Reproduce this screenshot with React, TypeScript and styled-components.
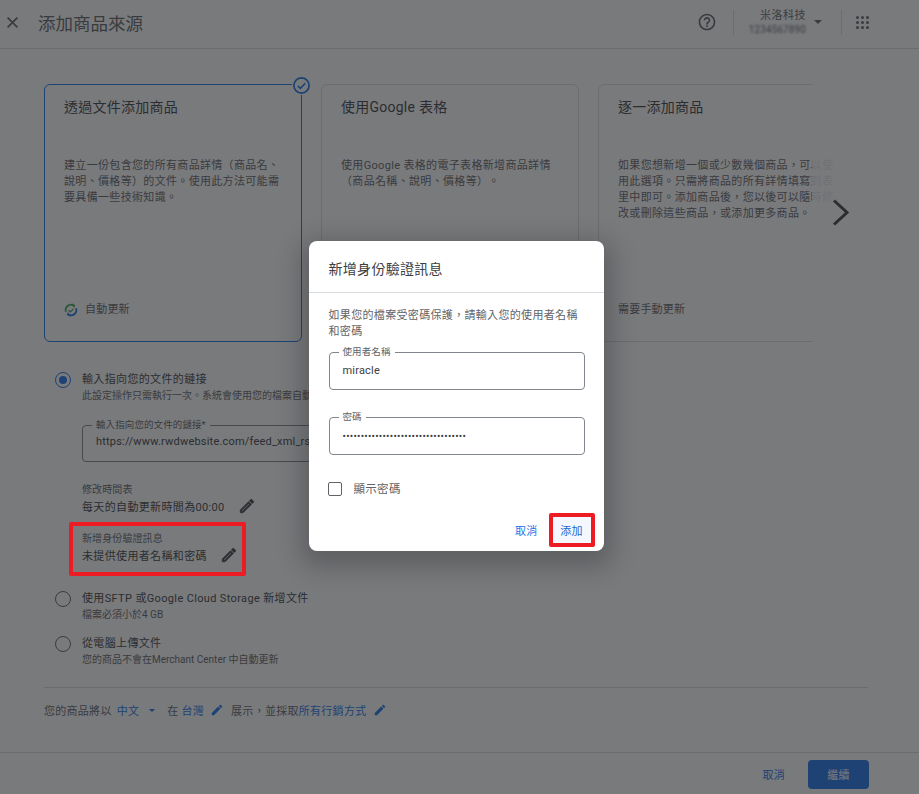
import React from "react";
import styled, { createGlobalStyle } from "styled-components";

const Global = createGlobalStyle`
  html, body { margin: 0; padding: 0; height: 100%; overflow: hidden; background: #fff; }
  body {
    font-family: Roboto, "Noto Sans CJK TC", "Liberation Sans", sans-serif;
    color: #3c4043;
    text-spacing-trim: space-all;
  }
  * { box-sizing: border-box; }
`;

const Page = styled.div`
  position: relative;
  width: 919px;
  height: 794px;
  display: flex;
  flex-direction: column;
  overflow: hidden;
`;

const Header = styled.header`
  height: 49px;
  flex: none;
  display: flex;
  align-items: center;
  padding: 0 50px 4px 7px;
  border-bottom: 1px solid #dadce0;
`;
const CloseBtn = styled.span`
  display: flex;
  width: 11px;
  margin-right: 20px;
  color: #5f6368;
`;
const Title = styled.h1`
  margin: 0;
  flex: 1;
  font-size: 17.5px;
  font-weight: 400;
  color: #5f6368;
`;
const HeaderDivider = styled.span`
  width: 1px;
  height: 25px;
  background: #dadce0;
`;
const HelpBtn = styled.span`
  display: flex;
  margin-right: 16px;
  color: #5f6368;
`;
const Account = styled.div`
  width: 72px;
  display: flex;
  flex-direction: column;
  align-items: flex-end;
  padding-top: 1px;
`;
const AccountName = styled.span`
  font-size: 11px;
  line-height: 14px;
  letter-spacing: 0.5px;
  color: #5f6368;
`;
const AccountId = styled.span`
  font-size: 10px;
  line-height: 13px;
  letter-spacing: 0.1px;
  color: #5f6368;
  filter: blur(1.3px);
`;
const HeaderCaret = styled.span`
  width: 0;
  height: 0;
  margin: 0 19px 0 8px;
  border: 4px solid transparent;
  border-top: 4px solid #5f6368;
  border-bottom: 0;
`;
const AppsBtn = styled.span`
  display: grid;
  grid-template-columns: repeat(3, 3px);
  gap: 2px;
  margin-left: 14px;
  span { width: 3px; height: 3px; border-radius: 50%; background: #5f6368; }
`;

const Body = styled.main`
  flex: 1;
  padding: 35px 0 0 44px;
  display: flex;
  flex-direction: column;
`;
const Carousel = styled.div`
  position: relative;
  display: flex;
  gap: 19px;
  width: 812px;
`;
const Card = styled.section<{ $selected?: boolean }>`
  position: relative;
  flex: none;
  width: 258px;
  height: 258px;
  padding: 13px 19px 23px;
  display: flex;
  flex-direction: column;
  border-radius: 6px;
  border: 1px solid ${(p) => (p.$selected ? "#1a73e8" : "#dadce0")};
`;
const CardTitle = styled.h2`
  margin: 0 0 42px;
  font-size: 14px;
  line-height: 18px;
  font-weight: 400;
  letter-spacing: 0.25px;
  color: #3c4043;
`;
const CardText = styled.p`
  margin: 0;
  flex: 1;
  font-size: 11px;
  line-height: 16px;
  letter-spacing: 0.33px;
  color: #5f6368;
`;
const CardNote = styled.div`
  display: flex;
  align-items: center;
  gap: 7px;
  font-size: 11px;
  line-height: 16px;
  letter-spacing: 0.2px;
  color: #5f6368;
`;
const CheckBadge = styled.span`
  position: absolute;
  top: -9px;
  right: -10px;
  display: flex;
  background: #fff;
  border-radius: 50%;
  padding: 1px;
`;
const Fade = styled.div`
  position: absolute;
  left: 768px;
  top: 0;
  width: 62px;
  height: 258px;
  background: linear-gradient(to right, rgba(255, 255, 255, 0.82), rgba(255, 255, 255, 0.96));
`;
const NextBtn = styled.span`
  position: absolute;
  left: 788px;
  top: 115px;
  display: flex;
  color: #3c4043;
`;

const Options = styled.div`
  margin-top: 30px;
  margin-left: 11px;
  display: flex;
  flex-direction: column;
`;
const Option = styled.div<{ $top?: number }>`
  display: grid;
  grid-template-columns: 16px 1fr;
  column-gap: 11px;
  margin-top: ${(p) => p.$top ?? 0}px;
`;
const Radio = styled.span<{ $on?: boolean }>`
  width: 16px;
  height: 16px;
  border-radius: 50%;
  border: 1.3px solid ${(p) => (p.$on ? "#1a73e8" : "#5f6368")};
  display: flex;
  align-items: center;
  justify-content: center;
  &::after {
    content: "";
    display: ${(p) => (p.$on ? "block" : "none")};
    width: 8px;
    height: 8px;
    border-radius: 50%;
    background: #1a73e8;
  }
`;
const OptionBody = styled.div`
  min-width: 0;
`;
const OptionTitle = styled.div`
  font-size: 11px;
  line-height: 16px;
  letter-spacing: 0.35px;
  color: #3c4043;
`;
const OptionSub = styled.div`
  font-size: 10px;
  line-height: 16px;
  color: #5f6368;
  white-space: nowrap;
`;
const PageField = styled.fieldset`
  margin: 15px 0 0;
  padding: 0 13px;
  width: 400px;
  height: 43px;
  border: 1px solid #80868b;
  border-radius: 4px;
`;
const PageLegend = styled.legend`
  padding: 0 4px;
  margin-left: -4px;
  font-size: 9.5px;
  line-height: 12px;
  letter-spacing: 0.1px;
  color: #5f6368;
`;
const PageFieldValue = styled.div`
  font-size: 11px;
  line-height: 16px;
  letter-spacing: 0.2px;
  margin-top: 3px;
  color: #3c4043;
  white-space: nowrap;
`;
const Setting = styled.div<{ $top: number }>`
  margin-top: ${(p) => p.$top}px;
`;
const SettingLabel = styled.div`
  font-size: 10px;
  line-height: 14px;
  letter-spacing: 0.1px;
  color: #5f6368;
`;
const SettingRow = styled.div`
  display: flex;
  align-items: center;
  gap: 13px;
  height: 18px;
  font-size: 11px;
  letter-spacing: 0.35px;
  color: #3c4043;
`;
const Line = styled.hr`
  width: 824px;
  margin: 19px 0 0;
  border: 0;
  border-top: 1px solid #dadce0;
`;
const Region = styled.div`
  margin-top: 14px;
  height: 16px;
  display: flex;
  align-items: center;
  font-size: 11px;
  letter-spacing: 0.28px;
  color: #5f6368;
  white-space: nowrap;
`;
const Link = styled.span<{ $left?: number }>`
  color: #1a73e8;
  margin-left: ${(p) => p.$left ?? 0}px;
`;
const RegionCaret = styled.span`
  width: 0;
  height: 0;
  margin: 0 12px 0 10px;
  border: 3px solid transparent;
  border-top: 3px solid #1a73e8;
  border-bottom: 0;
`;
const RegionIcon = styled.span<{ $left: number; $right: number }>`
  display: flex;
  color: #1a73e8;
  margin: 0 ${(p) => p.$right}px 0 ${(p) => p.$left}px;
`;

const Footer = styled.footer`
  height: 42px;
  flex: none;
  border-top: 1px solid #dadce0;
  display: flex;
  align-items: center;
  justify-content: flex-end;
  gap: 23px;
  padding: 1px 50px 0 0;
`;
const TextLink = styled.span`
  font-size: 11px;
  color: #1a73e8;
  letter-spacing: 0.3px;
`;
const Primary = styled.span`
  width: 61px;
  height: 29px;
  border-radius: 4px;
  background: #1a73e8;
  color: #fff;
  font-size: 11px;
  letter-spacing: 0.3px;
  display: flex;
  align-items: center;
  justify-content: center;
`;

const Scrim = styled.div`
  position: absolute;
  inset: 0;
  background: rgba(32, 33, 36, 0.6);
  display: flex;
  align-items: center;
  justify-content: center;
  padding: 0 7px 2px 0;
`;
const Annotation = styled.div`
  position: absolute;
  left: 69px;
  top: 522px;
  width: 177px;
  height: 54px;
  border: 4px solid #ed1c24;
  border-radius: 2px;
`;
const Dialog = styled.div`
  width: 295px;
  height: 310px;
  background: #fff;
  border-radius: 8px;
  box-shadow: 0 8px 24px 8px rgba(32, 33, 36, 0.3);
  display: flex;
  flex-direction: column;
`;
const DialogHead = styled.div`
  height: 52px;
  flex: none;
  padding: 19px 20px 0;
  border-bottom: 1px solid #dadce0;
  font-size: 14px;
  line-height: 18px;
  letter-spacing: 0.3px;
  color: #3c4043;
`;
const DialogBody = styled.div`
  flex: 1;
  padding: 15px 19px 0 20px;
  display: flex;
  flex-direction: column;
`;
const DialogText = styled.p`
  margin: 0;
  font-size: 11px;
  line-height: 16px;
  letter-spacing: 0.33px;
  color: #5f6368;
`;
const Field = styled.fieldset<{ $top: number }>`
  margin: ${(p) => p.$top}px 0 0;
  padding: 0 13px;
  height: 44px;
  border: 1px solid #80868b;
  border-radius: 4px;
`;
const Legend = styled.legend`
  padding: 0 4px;
  margin-left: -4px;
  font-size: 9.5px;
  line-height: 12px;
  letter-spacing: 0.1px;
  color: #5f6368;
`;
const FieldValue = styled.div<{ $dots?: boolean }>`
  font-size: ${(p) => (p.$dots ? "10px" : "11px")};
  line-height: 16px;
  margin-top: ${(p) => (p.$dots ? "6px" : "5px")};
  letter-spacing: ${(p) => (p.$dots ? "0.26px" : "0.2px")};
  color: #3c4043;
  white-space: nowrap;
`;
const CheckRow = styled.div`
  margin: 26px 0 0 -1px;
  display: flex;
  align-items: center;
  gap: 12px;
  font-size: 11.5px;
  line-height: 16px;
  letter-spacing: 0.3px;
  color: #5f6368;
`;
const CheckBox = styled.span`
  width: 14px;
  height: 14px;
  border: 1.3px solid #5f6368;
  border-radius: 2px;
`;
const DialogActions = styled.div`
  flex: none;
  display: flex;
  align-items: center;
  justify-content: flex-end;
  gap: 11px;
  padding: 0 9px 4px 0;
`;
const DialogCancel = styled.span`
  font-size: 11px;
  letter-spacing: 0.3px;
  color: #1a73e8;
`;
const DialogAdd = styled.span`
  width: 46px;
  height: 34px;
  border: 4px solid #ed1c24;
  border-radius: 2px;
  background: #f4f8fe;
  color: #1967d2;
  font-size: 11px;
  letter-spacing: 0.3px;
  display: flex;
  align-items: center;
  justify-content: center;
`;

const Close = () => (
  <svg width="11" height="11" viewBox="0 0 11 11" fill="none" stroke="currentColor" strokeWidth="1.7">
    <path d="M.6.6l9.8 9.8M10.4.6L.6 10.4" />
  </svg>
);
const Help = () => (
  <svg width="20" height="20" viewBox="0 0 24 24" fill="currentColor">
    <path d="M11 18h2v-2h-2v2zm1-16C6.48 2 2 6.48 2 12s4.48 10 10 10 10-4.48 10-10S17.52 2 12 2zm0 18c-4.41 0-8-3.59-8-8s3.59-8 8-8 8 3.59 8 8-3.59 8-8 8zm0-14c-2.21 0-4 1.79-4 4h2c0-1.1.9-2 2-2s2 .9 2 2c0 2-3 1.75-3 5h2c0-2.25 3-2.5 3-5 0-2.21-1.79-4-4-4z" />
  </svg>
);
const Pencil = () => (
  <svg width="18" height="18" viewBox="0 0 24 24" fill="#3c4043" stroke="#3c4043" strokeWidth="0.9">
    <path d="M14.06 9.02l.92.92L5.92 19H5v-.92l9.06-9.06M17.66 3c-.25 0-.51.1-.7.29l-1.83 1.83 3.75 3.75 1.83-1.83c.39-.39.39-1.02 0-1.41l-2.34-2.34c-.2-.2-.45-.29-.71-.29zm-3.6 3.19L3 17.25V21h3.75L17.81 9.94l-3.75-3.75z" />
  </svg>
);
const PencilSolid = () => (
  <svg width="14" height="14" viewBox="0 0 24 24" fill="currentColor">
    <path d="M3 17.25V21h3.75L17.81 9.94l-3.75-3.75L3 17.25zM20.71 7.04c.39-.39.39-1.02 0-1.41l-2.34-2.34c-.39-.39-1.02-.39-1.41 0l-1.83 1.83 3.75 3.75 1.83-1.83z" />
  </svg>
);
const Check = () => (
  <svg width="17" height="17" viewBox="0 0 17 17" fill="none" stroke="#1a73e8">
    <circle cx="8.5" cy="8.5" r="7.6" strokeWidth="1.7" />
    <path d="M4.8 8.8l2.6 2.5 4.9-5.1" strokeWidth="1.6" />
  </svg>
);
const Sync = () => (
  <svg width="14" height="14" viewBox="0 0 14 14" fill="none" strokeWidth="1.8">
    <path d="M2 8.8A5.2 5.2 0 0 1 9.4 2.4" stroke="#34a853" />
    <path d="M8.2 .2l3 2-1.3 3z" fill="#34a853" strokeWidth="0" />
    <path d="M12 5.2A5.2 5.2 0 0 1 4.6 11.6" stroke="#1a73e8" />
    <path d="M5.8 13.8l-3-2 1.3-3z" fill="#1a73e8" strokeWidth="0" />
    <path d="M4.6 7.2l1.8 1.7 3-3.1" stroke="#34a853" strokeWidth="1.2" />
  </svg>
);
const Chevron = () => (
  <svg width="20" height="28" viewBox="0 0 20 28" fill="none" stroke="currentColor" strokeWidth="3">
    <path d="M2 1.5l13 12L2 25.5" />
  </svg>
);

export default function App() {
  return (
    <Page>
      <Global />
      <Header>
        <CloseBtn><Close /></CloseBtn>
        <Title>添加商品來源</Title>
        <HelpBtn><Help /></HelpBtn>
        <HeaderDivider />
        <Account>
          <AccountName>米洛科技</AccountName>
          <AccountId>1234567890</AccountId>
        </Account>
        <HeaderCaret />
        <HeaderDivider />
        <AppsBtn>
          {Array.from({ length: 9 }).map((_, i) => <span key={i} />)}
        </AppsBtn>
      </Header>
      <Body>
        <Carousel>
          <Card $selected>
            <CheckBadge><Check /></CheckBadge>
            <CardTitle>透過文件添加商品</CardTitle>
            <CardText>建立一份包含您的所有商品詳情（商品名、說明、價格等）的文件。使用此方法可能需要具備一些技術知識。</CardText>
            <CardNote><Sync />自動更新</CardNote>
          </Card>
          <Card>
            <CardTitle>使用Google 表格</CardTitle>
            <CardText>使用Google 表格的電子表格新增商品詳情（商品名稱、說明、價格等）。</CardText>
          </Card>
          <Card>
            <CardTitle>逐一添加商品</CardTitle>
            <CardText>如果您想新增一個或少數幾個商品，可以使用此選項。只需將商品的所有詳情填寫到表里中即可。添加商品後，您以後可以隨時修改或刪除這些商品，或添加更多商品。</CardText>
            <CardNote>需要手動更新</CardNote>
          </Card>
          <Fade />
          <NextBtn><Chevron /></NextBtn>
        </Carousel>
        <Options>
          <Option>
            <Radio $on />
            <OptionBody>
              <OptionTitle>輸入指向您的文件的鏈接</OptionTitle>
              <OptionSub>此設定操作只需執行一次。系統會使用您的檔案自動更新商品資料</OptionSub>
              <PageField>
                <PageLegend>輸入指向您的文件的鏈接*</PageLegend>
                <PageFieldValue>https://www.rwdwebsite.com/feed_xml_rss</PageFieldValue>
              </PageField>
              <Setting $top={21}>
                <SettingLabel>修改時間表</SettingLabel>
                <SettingRow>每天的自動更新時間為00:00<Pencil /></SettingRow>
              </Setting>
              <Setting $top={17}>
                <SettingLabel>新增身份驗證訊息</SettingLabel>
                <SettingRow>未提供使用者名稱和密碼<Pencil /></SettingRow>
              </Setting>
            </OptionBody>
          </Option>
          <Option $top={27}>
            <Radio />
            <OptionBody>
              <OptionTitle>使用SFTP 或Google Cloud Storage 新增文件</OptionTitle>
              <OptionSub>檔案必須小於4 GB</OptionSub>
            </OptionBody>
          </Option>
          <Option $top={13}>
            <Radio />
            <OptionBody>
              <OptionTitle>從電腦上傳文件</OptionTitle>
              <OptionSub>您的商品不會在Merchant Center 中自動更新</OptionSub>
            </OptionBody>
          </Option>
        </Options>
        <Line />
        <Region>
          您的商品將以
          <Link $left={5}>中文</Link>
          <RegionCaret />
          在
          <Link $left={3}>台灣</Link>
          <RegionIcon $left={6} $right={7}><PencilSolid /></RegionIcon>
          展示，並採取
          <Link>所有行銷方式</Link>
          <RegionIcon $left={7} $right={0}><PencilSolid /></RegionIcon>
        </Region>
      </Body>
      <Footer>
        <TextLink>取消</TextLink>
        <Primary>繼續</Primary>
      </Footer>
      <Scrim>
        <Dialog>
          <DialogHead>新增身份驗證訊息</DialogHead>
          <DialogBody>
            <DialogText>如果您的檔案受密碼保護，請輸入您的使用者名稱和密碼</DialogText>
            <Field $top={6}>
              <Legend>使用者名稱</Legend>
              <FieldValue>miracle</FieldValue>
            </Field>
            <Field $top={21}>
              <Legend>密碼</Legend>
              <FieldValue $dots>••••••••••••••••••••••••••••••••••</FieldValue>
            </Field>
            <CheckRow><CheckBox />顯示密碼</CheckRow>
          </DialogBody>
          <DialogActions>
            <DialogCancel>取消</DialogCancel>
            <DialogAdd>添加</DialogAdd>
          </DialogActions>
        </Dialog>
      </Scrim>
      <Annotation />
    </Page>
  );
}
